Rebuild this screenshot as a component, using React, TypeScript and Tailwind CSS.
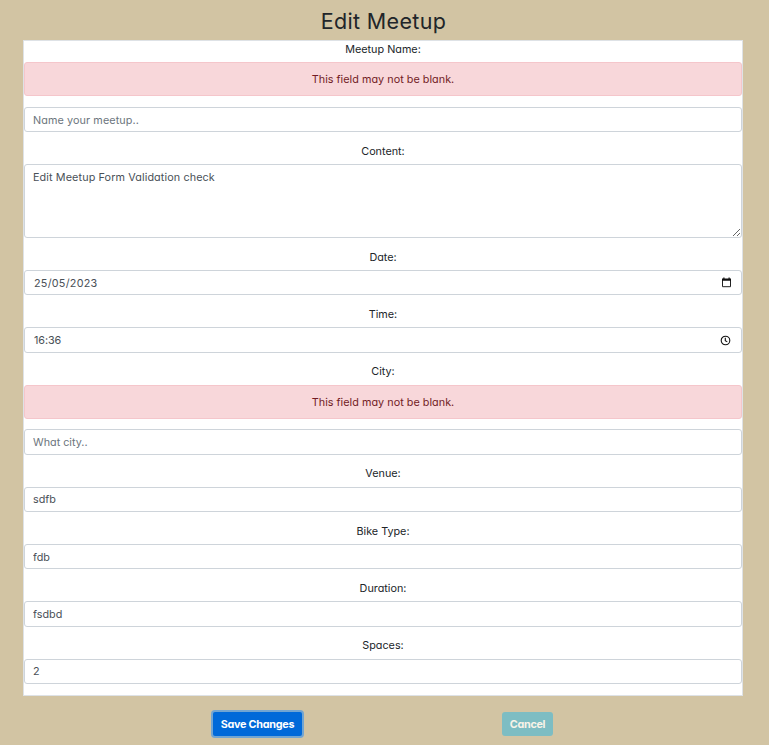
import type { ReactNode } from "react";

function CalendarIcon() {
  return (
    <svg className="mr-[-1px] h-[11px] w-[11px]" viewBox="0 0 11 11" fill="none">
      <path d="M1.5 2.5h8v7.2h-8z" stroke="#222" strokeWidth="1" />
      <path d="M1 1.5h9v2.3H1zM2.3.4h1.2v1.5H2.3zM7.5.4h1.2v1.5H7.5z" fill="#111" />
    </svg>
  );
}

function ClockIcon() {
  return (
    <svg className="h-[11px] w-[11px]" viewBox="0 0 11 11" fill="none" stroke="#111" strokeWidth="1.1">
      <circle cx="5.5" cy="5.5" r="4.3" />
      <path d="M5.3 2.8v2.9l2 1.2" />
    </svg>
  );
}

type LabelProps = { children: ReactNode; spacing?: string };

function Label({ children, spacing = "mt-[11px] h-[21px]" }: LabelProps) {
  return <label className={`${spacing} block text-center leading-[17px] text-[#212529]`}>{children}</label>;
}

function Alert({ gap }: { gap: string }) {
  return (
    <div
      className={`${gap} flex h-[34px] items-center justify-center rounded-[3px] border border-[#f5c6cb] bg-[#f8d7da] pt-[2px] text-[#721c24]`}
    >
      <span className="tracking-[0.03px]">This field may not be blank.</span>
    </div>
  );
}

type FieldProps = {
  value?: string;
  placeholder?: string;
  height?: string;
  text?: string;
  icon?: ReactNode;
};

function Field({ value, placeholder, height = "h-[25px]", text = "pt-[2px]", icon }: FieldProps) {
  return (
    <div className={`${height} flex items-center rounded-[3px] border border-[#ced4da] bg-white pr-[10px] pl-2`}>
      <input
        className={`${text} min-w-0 flex-1 bg-transparent text-[#495057] outline-none placeholder:text-[#6c757d]`}
        defaultValue={value}
        placeholder={placeholder}
      />
      {icon}
    </div>
  );
}

export default function App() {
  return (
    <main className="h-[745px] w-full overflow-hidden bg-[#d2c4a3] pr-[26px] pl-[23px] font-['Inter',sans-serif] text-[10.8px] font-[370] [font-feature-settings:'cv11','calt'_0]">
      <h1 className="h-10 pt-[8px] pl-px text-center text-[21.5px] leading-[27px] font-[370] tracking-[0.35px] text-[#212529]">
        Edit Meetup
      </h1>
      <form>
        <section className="h-[656px] border border-[#dee2e6] bg-white">
          <Label spacing="h-[21px]">Meetup Name:</Label>
          <Alert gap="mb-[11px]" />
          <Field placeholder="Name your meetup.." text="pt-[3px] tracking-[0.1px]" />
          <Label>Content:</Label>
          <textarea
            className="block h-[74px] w-full rounded-[3px] border border-[#ced4da] bg-white px-2 py-[4px] leading-[17px] tracking-[0.11px] text-[#495057] outline-none"
            defaultValue="Edit Meetup Form Validation check"
          />
          <Label>Date:</Label>
          <Field value="25/05/2023" text="pl-px pt-[3px] tracking-[0.25px]" icon={<CalendarIcon />} />
          <Label>Time:</Label>
          <Field value="16:36" height="h-[26px]" text="pl-px pt-[2px] tracking-[-0.1px]" icon={<ClockIcon />} />
          <Label spacing="mt-[10px] h-[22px]">City:</Label>
          <Alert gap="mb-[10px]" />
          <Field placeholder="What city.." height="h-[26px]" />
          <Label spacing="mt-[10px] h-[22px]">Venue:</Label>
          <Field value="sdfb" />
          <Label>Bike Type:</Label>
          <Field value="fdb" text="pt-[3px]" />
          <Label>Duration:</Label>
          <Field value="fsdbd" height="h-[26px]" />
          <Label spacing="mt-[10px] h-[22px]">Spaces:</Label>
          <Field value="2" />
        </section>
        <div className="mt-4 flex pl-[190px] font-bold text-white">
          <button
            type="button"
            className="h-6 w-[89px] rounded-[2px] bg-[#0069d9] pt-[2px] tracking-[-0.25px] whitespace-nowrap ring-2 ring-[#72a5d2]"
          >
            Save Changes
          </button>
          <button
            type="button"
            className="ml-[200px] h-6 w-[51px] rounded-[3px] bg-[#7dbdc3] pt-[2px] tracking-[-0.3px] text-[#f8f3e8]"
          >
            Cancel
          </button>
        </div>
      </form>
    </main>
  );
}
